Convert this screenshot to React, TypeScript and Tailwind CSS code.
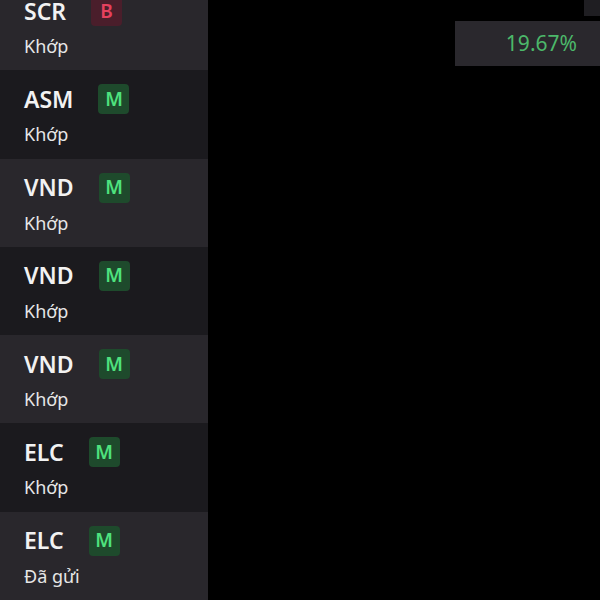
import React from "react";

type Order = { ticker: string; side: "B" | "M"; status: string };

const ORDERS: Order[] = [
  { ticker: "SCR", side: "B", status: "Khớp" },
  { ticker: "ASM", side: "M", status: "Khớp" },
  { ticker: "VND", side: "M", status: "Khớp" },
  { ticker: "VND", side: "M", status: "Khớp" },
  { ticker: "VND", side: "M", status: "Khớp" },
  { ticker: "ELC", side: "M", status: "Khớp" },
  { ticker: "ELC", side: "M", status: "Đã gửi" },
];

function SideBadge({ side }: { side: "B" | "M" }) {
  const tone =
    side === "B"
      ? "bg-[#4a1e2b] text-[#e5415e]"
      : "bg-[#1e4a2c] text-[#4ee27e]";
  return (
    <span
      className={`flex h-[30px] w-[31px] items-center justify-center rounded-[4px] text-[19px] font-semibold leading-none ${tone}`}
    >
      {side}
    </span>
  );
}

export default function App() {
  return (
    <div className="flex h-[600px] w-[600px] overflow-hidden bg-black font-['Noto_Sans',sans-serif]">
      {/* order list */}
      <div className="-mt-[18px] flex w-[208px] shrink-0 flex-col">
        {ORDERS.map((o, i) => (
          <div
            key={i}
            className={`flex h-[88.3px] shrink-0 flex-col pl-[24px] pt-[14px] ${
              i % 2 === 0 ? "bg-[#29272c]" : "bg-[#1b1a1e]"
            }`}
          >
            <div className="flex h-[30px] items-center gap-[25px]">
              <span className="text-[23px] font-semibold leading-none text-[#f2f2f2]">
                {o.ticker}
              </span>
              <SideBadge side={o.side} />
            </div>
            <span className="mt-[8px] text-[18px] leading-[24px] text-[#e6e6e6]">
              {o.status}
            </span>
          </div>
        ))}
      </div>

      {/* right side */}
      <div className="flex flex-1 flex-col">
        <div className="flex h-[16px] justify-end">
          <div className="h-[16px] w-[16px] bg-[#1f1e22]" />
        </div>
        <div className="mt-[5px] ml-auto flex h-[45px] w-[145px] items-center justify-end bg-[#2a282d] pr-[23px]">
          <span className="text-[21px] leading-none text-[#4cb86a]">19.67%</span>
        </div>
      </div>
    </div>
  );
}
